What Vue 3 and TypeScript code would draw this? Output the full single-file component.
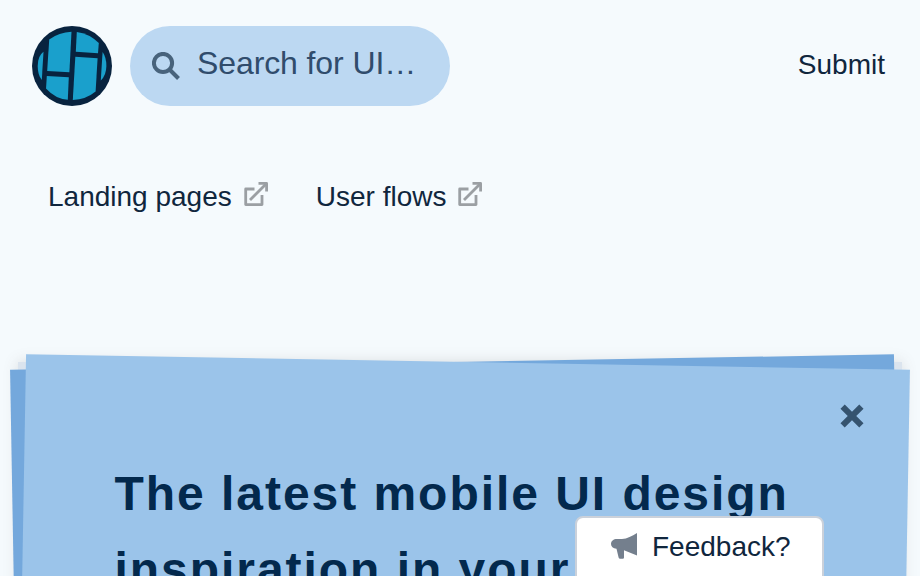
<script setup lang="ts">
interface NavLink {
  label: string
}

const links: NavLink[] = [{ label: 'Landing pages' }, { label: 'User flows' }]
</script>

<template>
  <div class="page">
    <header class="header">
      <svg class="logo" viewBox="0 0 80 80" aria-label="Home">
        <circle cx="40" cy="40" r="40" fill="#08233f" />
        <g fill="#1aa0cc">
          <path d="M17.2 13.4 Q27 6.5 39.5 5.8 L37.4 46.2 L15.2 45 Z" />
          <path d="M14.8 50 L36.8 51.2 L35.8 73.8 Q23.5 73 14 62.5 Z" />
          <path d="M44.8 6 Q57 7.5 66.8 17 L66 27.3 L43.8 25.8 Z" />
          <path d="M43.3 30.8 L65.6 32.3 L63.6 65.5 Q54 73.5 40.8 74 Z" />
          <path d="M11.5 25.8 Q5.7 30 5.7 40 Q5.7 49 9.8 54 Z" />
          <path d="M70.6 26 Q74.4 31.5 74.4 40 Q74.2 49.5 68.8 54.5 Z" />
        </g>
      </svg>
      <div class="search">
        <svg class="search-icon" viewBox="0 0 28 28">
          <circle cx="11" cy="11" r="9.1" />
          <path d="M17.5 17.5 L26.5 26.5" />
        </svg>
        <span>Search for UI…</span>
      </div>
      <a class="submit">Submit</a>
    </header>

    <nav class="nav">
      <a v-for="link in links" :key="link.label" class="nav-link">
        <span>{{ link.label }}</span>
        <svg class="external" viewBox="0 0 24 24">
          <path d="M10.5 7 H1.7 V22.6 H18 V13" />
          <path d="M6 18 L22 2" />
          <path d="M14.5 1.4 H22.6 V9.5" />
        </svg>
      </a>
    </nav>

    <section class="card">
      <div class="card-body">
        <svg class="close" viewBox="0 0 24 24"><path d="M2.6 2.6 L21.4 21.4 M21.4 2.6 L2.6 21.4" /></svg>
        <h1>The latest mobile UI design<br />inspiration in your</h1>
      </div>
    </section>

    <button class="feedback">
      <svg class="horn" viewBox="0 0 26 26">
        <path d="M26 0 V22.5 L13 17.3 V24.5 Q13 25.7 11.8 25.7 H9.2 Q7.9 25.7 7.6 24.5 L5.5 15.8 C2 15.5 0 13.7 0 11 C0 8 2.5 6 6 6 H11 C16 5.8 21 3.2 26 0 Z" />
      </svg>
      <span>Feedback?</span>
    </button>
  </div>
</template>

<style>
body {
  margin: 0;
  overflow: hidden;
}
</style>

<style scoped>
.page {
  position: relative;
  width: 920px;
  height: 576px;
  overflow: hidden;
  background: #f5fafd;
  color: #10263d;
  font-family: 'Liberation Sans', Arial, sans-serif;
  font-size: 28px;
}
.header {
  display: flex;
  align-items: center;
  height: 80px;
  padding: 26px 35px 0 32px;
}
.logo {
  width: 80px;
  height: 80px;
}
.search {
  display: flex;
  align-items: center;
  box-sizing: border-box;
  width: 320px;
  height: 80px;
  margin-left: 18px;
  padding: 0 0 6px 21.5px;
  border-radius: 40px;
  background: #bcd8f2;
  color: #304c6c;
  font-size: 32px;
  letter-spacing: -0.1px;
}
.search-icon {
  width: 28px;
  height: 28px;
  margin: 5px 17.5px 0 0;
  fill: none;
  stroke: #48637c;
  stroke-width: 4;
}
.submit {
  margin-left: auto;
  padding-bottom: 3px;
}
.nav {
  display: flex;
  gap: 48px;
  height: 32px;
  padding: 75px 48px 0;
}
.nav-link {
  display: flex;
  line-height: 32px;
}
.external {
  width: 24px;
  height: 24px;
  margin: 1px 0 0 12px;
  fill: none;
  stroke: #9b9fa3;
  stroke-width: 2.8;
  stroke-linejoin: round;
}
.card {
  position: relative;
  z-index: 0;
  width: 884px;
  height: 917px;
  margin: 149px 18px 0;
  background: #dbe4ee;
  box-shadow: 0 0 14px rgba(90, 80, 70, 0.18);
}
.card::before,
.card::after {
  content: '';
  position: absolute;
  z-index: -1;
  inset: 0;
}
.card::before {
  background: #74a8dc;
  transform: rotate(-1deg);
}
.card::after {
  background: #9bc4ea;
  transform: rotate(1deg);
}
.card-body {
  display: flex;
  flex-direction: column;
  padding: 42px 38px 0 96.5px;
}
.close {
  align-self: flex-end;
  width: 24px;
  height: 24px;
  fill: none;
  stroke: #35536f;
  stroke-width: 6;
}
h1 {
  margin: 28px 0 0;
  color: #03294d;
  font-size: 48px;
  line-height: 76px;
  letter-spacing: 1.96px;
  white-space: nowrap;
}
.feedback {
  position: absolute;
  top: 516px;
  left: 575px;
  display: flex;
  align-items: center;
  box-sizing: border-box;
  width: 249px;
  height: 72px;
  padding: 0 0 10px 34px;
  border: 2px solid #cbd1da;
  border-radius: 8px;
  background: #fff;
  color: #10263d;
  font: inherit;
}
.horn {
  width: 26px;
  height: 26px;
  margin: -2px 15px 0 0;
  fill: #747f8d;
}
</style>
